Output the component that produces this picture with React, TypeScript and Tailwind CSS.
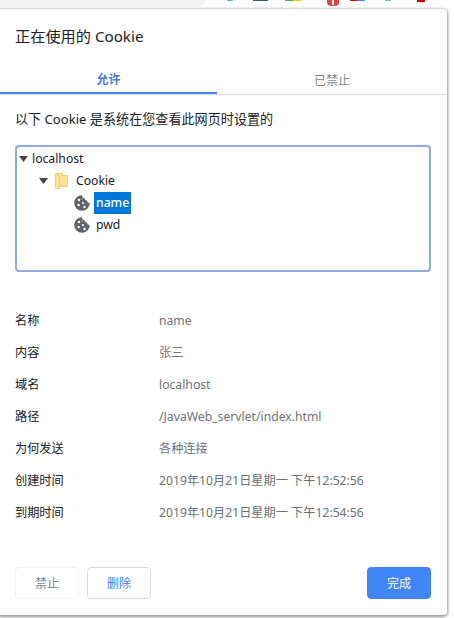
import { ReactNode } from "react";

const details = [
  ["名称", "name"],
  ["内容", "张三"],
  ["域名", "localhost"],
  ["路径", "/JavaWeb_servlet/index.html"],
  ["为何发送", "各种连接"],
  ["创建时间", "2019年10月21日星期一 下午12:52:56"],
  ["到期时间", "2019年10月21日星期一 下午12:54:56"],
];

function Arrow() {
  return (
    <svg width="9" height="6" viewBox="0 0 9 6" className="shrink-0">
      <path d="M0 0h9L4.5 6z" fill="#444" />
    </svg>
  );
}

function FolderIcon() {
  return (
    <svg width="13" height="16" viewBox="0 0 13 16" className="shrink-0">
      <path d="M.5.5h7v2h5v11h-8v2h-4z" fill="#fde293" stroke="#f2cf72" />
      <path d="M.5.5l4 3v12" fill="none" stroke="#f2cf72" />
    </svg>
  );
}

function CookieIcon() {
  return (
    <svg width="16" height="16" viewBox="0 0 16 16" className="shrink-0">
      <path
        d="M8 .2a3 3 0 0 0 2.6 3 2.9 2.9 0 0 0 2.3 2.6A2.8 2.8 0 0 0 15.8 8 7.8 7.8 0 1 1 8 .2z"
        fill="#5f6368"
      />
      <circle cx="5" cy="5" r="1.2" fill="#fff" />
      <circle cx="4.6" cy="10" r="1.2" fill="#fff" />
      <circle cx="9" cy="8" r="1.1" fill="#fff" />
      <circle cx="10.5" cy="12" r="1.2" fill="#fff" />
      <circle cx="8" cy="4" r=".6" fill="#fff" />
    </svg>
  );
}

function Row({ indent, children }: { indent: string; children: ReactNode }) {
  return <div className={`flex h-[22px] items-center ${indent}`}>{children}</div>;
}

function Button({ className, children }: { className: string; children: ReactNode }) {
  return (
    <button className={`flex h-8 w-16 items-center justify-center rounded border pt-[1px] text-[12px] ${className}`}>
      {children}
    </button>
  );
}

export default function App() {
  return (
    <div className="h-[618px] w-[454px] overflow-hidden bg-white font-['Noto_Sans','Noto_Sans_CJK_SC',sans-serif] text-[13px] text-[#202124]">
      <div className="flex h-[9px] items-start">
        <div className="h-[7px] w-[205px] rounded-br-xl bg-[#f1f3f4]" />
        <div className="ml-[22px] h-[1px] w-[6px] rounded-b bg-[#34d07f]" />
        <div className="ml-[20px] h-[1px] w-[15px] bg-[#35607c]" />
        <div className="ml-[17px] h-[1px] w-[8px] bg-[#4caf50]" />
        <div className="h-[1px] w-[8px] bg-[#fbc400]" />
        <div className="ml-[26px] flex h-[6px] w-[12px] justify-center rounded-b bg-[#ea3f3f]">
          <div className="h-[5px] w-[2px] bg-white" />
        </div>
        <div className="ml-[11px] h-[1px] w-[7px] bg-[#e60012]" />
        <div className="h-[1px] w-[8px] bg-[#4285f4]" />
        <div className="ml-[20px] h-[1px] w-[6px] bg-[#6fb9cc]" />
        <div className="ml-[26px] h-[2px] w-[8px] bg-[#d50000]" />
      </div>

      <div className="flex h-[606px] w-[447px] flex-col rounded-tr-sm rounded-br-sm bg-white shadow-[0_1px_3px_1px_rgba(60,64,67,0.55)]">
        <h1 className="flex h-[54px] items-center px-[15px] text-[15.2px] font-normal">正在使用的 Cookie</h1>

        <div className="flex h-[32px] border-b border-[#dadce0]">
          <div className="flex w-[217px] items-center justify-center border-b-2 border-[#4285f4] pt-[5px] text-[12px] font-bold text-[#4a78d8]">
            允许
          </div>
          <div className="flex w-[230px] items-center justify-center pt-[5px] text-[12px] text-[#80868b]">已禁止</div>
        </div>

        <p className="mt-[14px] px-[15px] text-[13.1px] leading-5">以下 Cookie 是系统在您查看此网页时设置的</p>

        <div className="mx-[15px] mt-4 h-[127px] w-[416px] rounded-sm border-2 border-[#8eabe3] pt-[1px] text-[12.2px]">
          <Row indent="pl-[2px]">
            <Arrow />
            <span className="ml-[4px]">localhost</span>
          </Row>
          <Row indent="pl-[22px]">
            <Arrow />
            <span className="ml-[7px]">
              <FolderIcon />
            </span>
            <span className="ml-[8px]">Cookie</span>
          </Row>
          <Row indent="pl-[57px]">
            <CookieIcon />
            <span className="ml-[4px] flex h-[22px] items-center bg-[#0078d7] px-[2px] font-medium text-white">name</span>
          </Row>
          <Row indent="pl-[57px]">
            <CookieIcon />
            <span className="ml-[6px]">pwd</span>
          </Row>
        </div>

        <dl className="mt-[33px] flex flex-col px-[15px] text-[12.2px]">
          {details.map(([label, value]) => (
            <div key={label} className="flex h-8 items-center">
              <dt className="w-[144px] text-[#202124]">{label}</dt>
              <dd className="text-[#6f7277]">{value}</dd>
            </div>
          ))}
        </dl>

        <div className="mt-[38px] flex pl-[15px] pr-[16px]">
          <Button className="border-[#f1f3f4] text-[#80868b]">禁止</Button>
          <Button className="ml-2 border-[#dadce0] text-[#3b82f6]">删除</Button>
          <Button className="ml-auto border-[#4285f4] bg-[#4285f4] text-white">完成</Button>
        </div>
      </div>
    </div>
  );
}
